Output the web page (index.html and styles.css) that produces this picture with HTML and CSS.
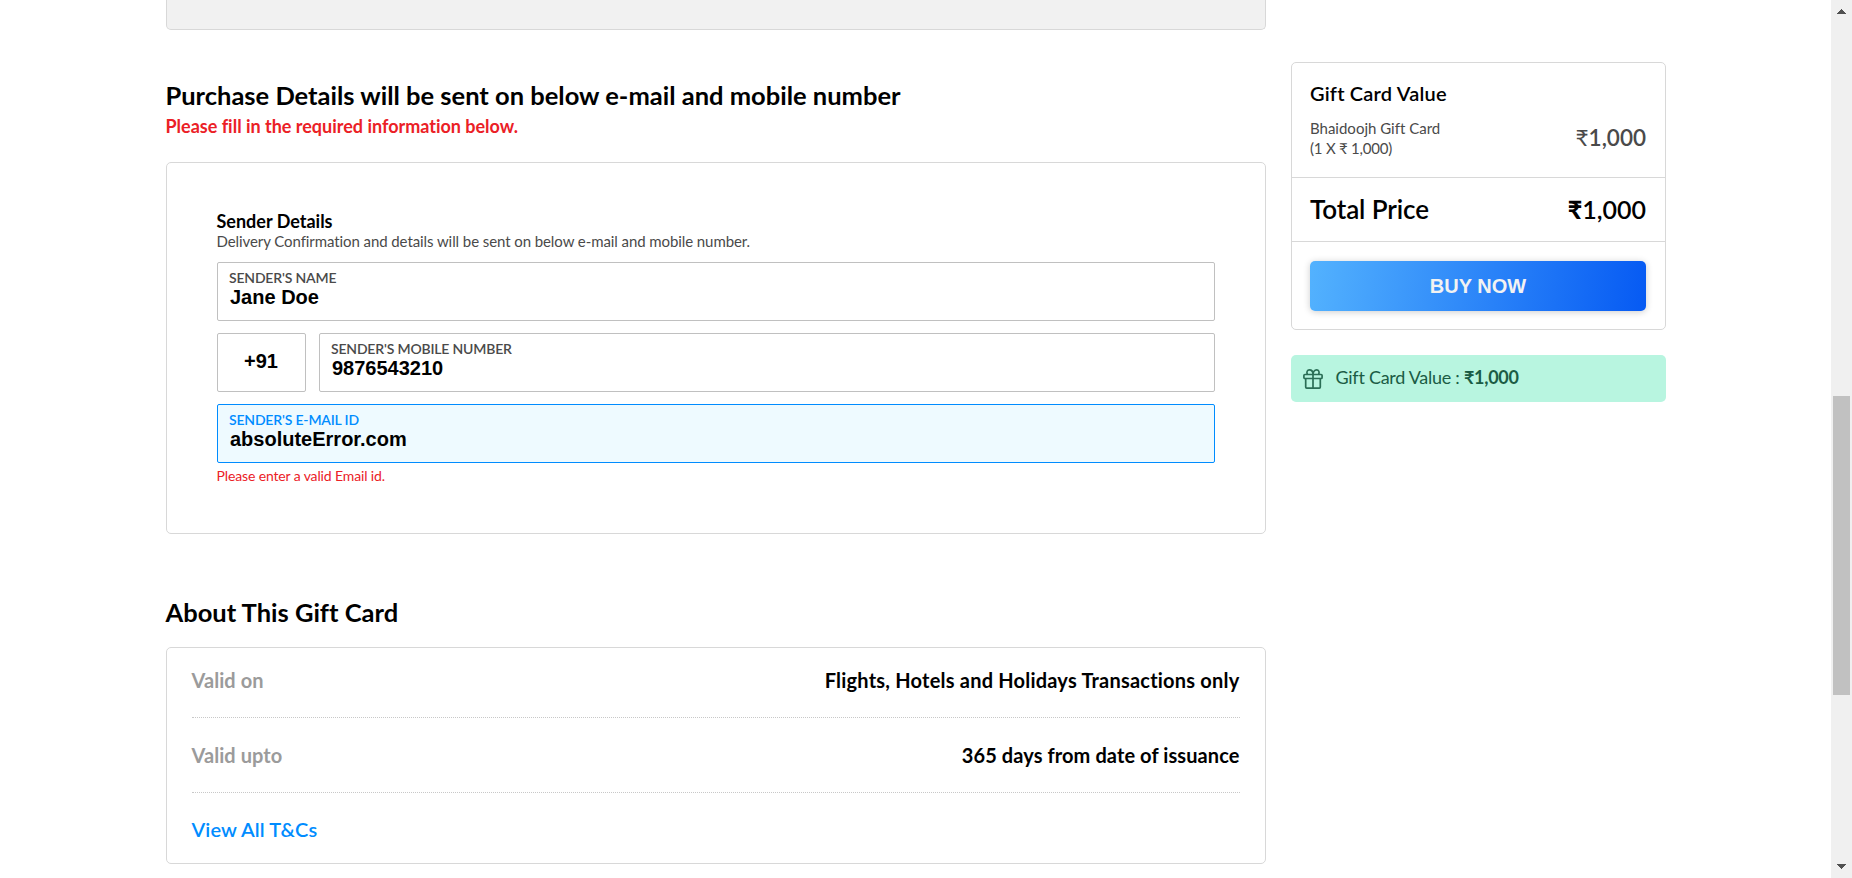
FILE: index.html
```
<!DOCTYPE html>
<html lang="en">
<head>
<meta charset="utf-8">
<title>Gift Card</title>
<link rel="stylesheet" href="styles.css">
</head>
<body>
<div class="page">
  <div class="container">
    <main class="main">
      <div class="prev-card"></div>
      <h2 class="heading purchase-heading">Purchase Details will be sent on below e-mail and mobile number</h2>
      <p class="required">Please fill in the required information below.</p>
      <section class="card sender">
        <h3 class="sender-title">Sender Details</h3>
        <p class="sender-desc">Delivery Confirmation and details will be sent on below e-mail and mobile number.</p>
        <div class="field"><label class="label">SENDER'S NAME</label><span class="value">Jane Doe</span></div>
        <div class="phone-row">
          <div class="field code"><span class="value">+91</span></div>
          <div class="field grow"><label class="label">SENDER'S MOBILE NUMBER</label><span class="value">9876543210</span></div>
        </div>
        <div class="field active"><label class="label">SENDER'S E-MAIL ID</label><span class="value">absoluteError.com</span></div>
        <p class="error">Please enter a valid Email id.</p>
      </section>
      <h2 class="heading about-heading">About This Gift Card</h2>
      <section class="card about">
        <div class="row"><span class="key">Valid on</span><span class="val">Flights, Hotels and Holidays Transactions only</span></div>
        <div class="row"><span class="key">Valid upto</span><span class="val">365 days from date of issuance</span></div>
        <div class="row"><a class="link">View All T&amp;Cs</a></div>
      </section>
    </main>
    <aside class="side">
      <section class="card summary">
        <div class="summary-top">
          <h4 class="summary-title">Gift Card Value</h4>
          <div class="summary-line">
            <p class="summary-desc">Bhaidoojh Gift Card<br><span class="quantity">(1 X ₹ 1,000)</span></p>
            <span class="amount"><span class="amount-rupee">₹</span>1,000</span>
          </div>
        </div>
        <div class="total"><span>Total Price</span><span class="total-amount"><b class="rupee">₹</b>1,000</span></div>
        <div class="buy"><button class="buy-btn">BUY NOW</button></div>
      </section>
      <div class="note">
        <svg class="gift" viewBox="0 0 20 20" fill="none" stroke="#2b6e56" stroke-width="1.7">
          <rect x=".9" y="5.500" width="18.200" height="4" rx="1"/>
          <path d="M2.700 9.500v8.600q0 1 1 1h12.600q1 0 1-1V9.500M10 5.500v13.600M4.300 5.300C3.300 3 4.300.9 6.300.9 8.600.9 10 2.800 10 5.300 10 2.800 11.400.9 13.700.9c2 0 3 2.100 2 4.400"/>
        </svg>
        <span class="note-text">Gift Card Value : <b>₹1,000</b></span>
      </div>
    </aside>
  </div>
  <div class="scrollbar">
    <svg class="arrow" viewBox="0 0 9 5"><path d="M4 0h1v1h1v1h1v1h1v1h1v1H0V4h1V3h1V2h1V1h1z" fill="#505050"/></svg>
    <div class="thumb"></div>
    <svg class="arrow" viewBox="0 0 9 5"><path d="M4 5h1V4h1V3h1V2h1V1h1V0H0v1h1v1h1v1h1v1h1z" fill="#505050"/></svg>
  </div>
</div>
</body>
</html>
```
FILE: styles.css
```
* { box-sizing: border-box; }
body { margin: 0; background: #fff; color: #000; font-family: Lato, sans-serif; font-variant-ligatures: no-common-ligatures; }
h2, h3, h4, p { margin: 0; }
.page { display: flex; height: 878px; overflow: hidden; }
.container { flex: 1; display: flex; gap: 25px; padding-left: 165.5px; }
.main { width: 1100px; }
.card { border: 1px solid #d8d8d8; border-radius: 5px; }
.prev-card { height: 30px; background: #f1f1f1; border: 1px solid #d8d8d8; border-top: 0; border-radius: 0 0 5px 5px; }
.heading { font-size: 25.5px; font-weight: 700; line-height: 32px; }
.purchase-heading { margin-top: 49px; }
.required { font-size: 18px; font-weight: 700; line-height: 22px; letter-spacing: -.01px; color: #eb2026; margin-top: 4px; }
.sender { height: 372px; margin-top: 25px; padding: 47px 50px 0; }
.sender-title { font-size: 18px; font-weight: 700; line-height: 22px; }
.sender-desc { font-size: 15px; line-height: 18px; letter-spacing: -.08px; color: #4a4a4a; }
.field { height: 59px; border: 1px solid #c0c0c0; border-radius: 2px; padding: 6px 11.5px 0; margin-top: 12px; display: flex; flex-direction: column; }
.label { font-size: 14px; font-weight: 600; line-height: 17px; letter-spacing: -.18px; color: #4a4a4a; }
.value { font: 700 20px/23px "Liberation Sans", Arial, sans-serif; padding-left: 1px; }
.phone-row { display: flex; gap: 13px; }
.code { width: 89px; align-items: center; justify-content: center; padding: 0 1px 3px 0; }
.grow { flex: 1; }
.active { background: #eefaff; border-color: #008cff; }
.active .label { color: #008cff; }
.error { font-size: 14px; line-height: 17px; letter-spacing: -.13px; color: #eb2026; margin-top: 4px; }
.about-heading { margin-top: 62px; }
.about { height: 217px; margin-top: 19px; padding: 0 25px; }
.row { height: 75px; display: flex; justify-content: space-between; align-items: center; border-bottom: 1px dotted #c8c8c8; font-size: 20px; font-weight: 700; line-height: 24px; padding-bottom: 1px; }
.row:first-child { height: 70px; padding-bottom: 5px; }
.row:last-child { border: 0; padding-bottom: 4px; }
.key { color: #9b9b9b; letter-spacing: .07px; }
.val { letter-spacing: .09px; }
.row:first-child .val { letter-spacing: .21px; }
.link { color: #008cff; font-weight: 600; letter-spacing: .1px; }
.side { width: 375px; padding-top: 62px; }
.summary { height: 268px; }
.summary-top { height: 115px; border-bottom: 1px solid #d8d8d8; padding: 18px 18.5px 0; }
.summary-title { font-size: 20px; font-weight: 600; line-height: 24px; letter-spacing: .2px; }
.summary-line { display: flex; justify-content: space-between; align-items: center; margin-top: 13px; }
.summary-desc { font-size: 15px; line-height: 20px; color: #4a4a4a; }
.quantity { letter-spacing: -.22px; }
.amount { font-size: 22.5px; font-weight: 600; line-height: 30px; color: #4a4a4a; }
.amount-rupee { font-weight: 400; }
.total { height: 64px; border-bottom: 1px solid #d8d8d8; padding: 0 18.5px 2px; display: flex; justify-content: space-between; align-items: center; font-size: 26px; font-weight: 600; line-height: 32px; letter-spacing: -.1px; }
.total-amount { font-size: 25px; letter-spacing: 0; }
.rupee { font-weight: 900; }
.buy { padding: 19px 18.5px 0; }
.buy-btn { display: block; width: 336px; height: 50px; border: 0; border-radius: 5px; background: linear-gradient(97deg, #53b2fe, #065af3); box-shadow: 0 1px 7px rgba(0,0,0,.2); color: #f2f2f2; font: 700 20px/24px "Liberation Sans", Arial, sans-serif; padding: 0 0 1px; }
.note { height: 47px; margin-top: 25px; border-radius: 5px; background: #b8f5e0; color: #1b5c45; padding-left: 12px; display: flex; align-items: center; gap: 13px; font-size: 18px; line-height: 22px; letter-spacing: -.27px; }
.note-text { padding-bottom: 3px; }
.gift { width: 20px; height: 20px; }
.scrollbar { width: 21px; background: #f0f0f0; display: flex; flex-direction: column; align-items: center; padding: 9px 0; }
.arrow { width: 9px; height: 5px; }
.thumb { width: 17px; height: 299px; margin: 382px 0 auto; background: #c1c1c1; }
```
